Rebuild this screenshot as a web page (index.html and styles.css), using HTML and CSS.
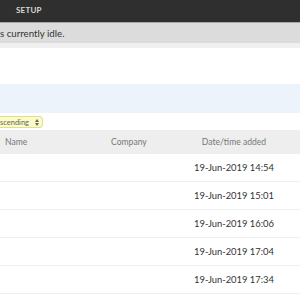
FILE: index.html
```html
<html>

<head>
	<meta charset="utf-8">
	<link rel="stylesheet" href="styles.css">
</head>

<body>

	<div class="topbar">
		<span class="nav-item">Setup</span>
	</div>

	<div class="status">s currently idle.</div>
	<div class="status-sub"></div>

	<div class="spacer"></div>

	<div class="filter"></div>

	<div class="sort">
		<span class="select">
			<span>scending</span>
			<svg class="arrows" width="4" height="7" viewBox="0 0 4 7">
				<path d="M0 3 L2 0 L4 3 Z M0 4 L2 7 L4 4 Z" fill="#666" />
			</svg>
		</span>
	</div>

	<div class="table">
		<div class="row head">
			<span class="c-name">Name</span>
			<span class="c-company">Company</span>
			<span class="c-date">Date/time added</span>
		</div>
		<div class="row">
			<span class="c-name"></span>
			<span class="c-company"></span>
			<span class="c-date">19-Jun-2019 14:54</span>
		</div>
		<div class="row">
			<span class="c-name"></span>
			<span class="c-company"></span>
			<span class="c-date">19-Jun-2019 15:01</span>
		</div>
		<div class="row">
			<span class="c-name"></span>
			<span class="c-company"></span>
			<span class="c-date">19-Jun-2019 16:06</span>
		</div>
		<div class="row">
			<span class="c-name"></span>
			<span class="c-company"></span>
			<span class="c-date">19-Jun-2019 17:04</span>
		</div>
		<div class="row">
			<span class="c-name"></span>
			<span class="c-company"></span>
			<span class="c-date">19-Jun-2019 17:34</span>
		</div>
	</div>

</body>

</html>
```

FILE: styles.css
```css
* {
	box-sizing: border-box;
}

html {
	font-family: Lato, "Open Sans", sans-serif;
	font-size: 9.4px;
}

body {
	margin: 0;
	background: #fff;
	color: #333;
	overflow: hidden;
}

.topbar {
	height: 23px;
	background: #2f2f2f;
	border-bottom: 1px solid #a8a8a8;
	padding-left: 16px;
	display: flex;
	align-items: center;
}

.nav-item {
	color: #d8d8d8;
	font-size: 8px;
	font-weight: bold;
	text-transform: uppercase;
	letter-spacing: .2px;
	margin-top: -2px;
}

.status {
	height: 20px;
	line-height: 20px;
	background: #dcdcdc;
	font-size: 9.7px;
	color: #333;
}

.status-sub {
	height: 5px;
	background: #f0f0f0;
}

.spacer {
	height: 36px;
}

.filter {
	height: 29px;
	background: #edf3fb;
}

.sort {
	height: 17px;
	padding-top: 3px;
}

.select {
	display: flex;
	align-items: center;
	justify-content: space-between;
	height: 12px;
	width: 43px;
	background: #fbfbc4;
	border: 1px solid #dede98;
	border-left: none;
	border-radius: 0 4px 4px 0;
	font-size: 7.5px;
	color: #666;
	padding-right: 3px;
}

.arrows {
	display: block;
}

.row {
	display: grid;
	grid-template-columns: 106px 80px 96px 1fr;
	height: 28px;
	align-items: center;
	border-bottom: 1px solid #efefef;
}

.row.head {
	height: 24px;
	background: #eeeeee;
	border-bottom: none;
	color: #777;
	font-size: 8.6px;
}

.c-name {
	padding-left: 5px;
}

.c-company {
	padding-left: 5px;
}

.c-date {
	text-align: center;
	white-space: nowrap;
}
```
